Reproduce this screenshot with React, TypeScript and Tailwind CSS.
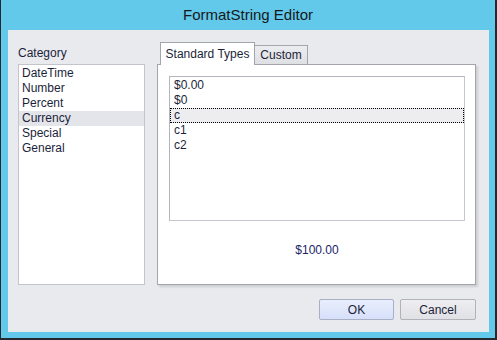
import React, { useState } from "react";

const categories = ["DateTime", "Number", "Percent", "Currency", "Special", "General"];
const formats = ["$0.00", "$0", "c", "c1", "c2"];

const App: React.FC = () => {
  const [category, setCategory] = useState<string>("Currency");
  const [format, setFormat] = useState<string>("c");
  const [tab, setTab] = useState<"standard" | "custom">("standard");

  return (
    <div
      className="w-[497px] h-[340px] bg-[#63c9ea] border-l border-r-2 border-b-2 border-[#23292e] flex flex-col text-[12px] text-[#1c1f3a]"
      style={{ fontFamily: '"Liberation Sans", Arial, sans-serif' }}
    >
      {/* title bar */}
      <div className="h-[30px] shrink-0 flex items-center justify-center text-[15px] text-[#15181c] pt-[1px]">
        FormatString Editor
      </div>

      {/* dialog body */}
      <div className="ml-[7px] mr-[6px] h-[302px] shrink-0 bg-[#e9eaee] pt-[12px] pl-[10px] pr-[13px] flex flex-col">
        <div className="h-[243px] flex gap-[12px]">
          {/* category column */}
          <div className="w-[127px] flex flex-col">
            <div className="mt-[4px] mb-[3px] leading-[15px] h-[15px]">Category</div>
            <div className="flex-1 bg-white border border-[#c3c4cc] py-[1px]">
              {categories.map((c) => (
                <div
                  key={c}
                  onClick={() => setCategory(c)}
                  className={
                    "h-[15px] leading-[15px] pl-[3px] cursor-default " +
                    (c === category ? "bg-[#e4e5ea]" : "")
                  }
                >
                  {c}
                </div>
              ))}
            </div>
          </div>

          {/* tabs column */}
          <div className="w-[319px] flex flex-col">
            <div className="h-[22px] flex items-end pl-[3px] relative z-10">
              <button
                onClick={() => setTab("standard")}
                className="w-[95px] h-[23px] -mb-[1px] bg-white border border-b-0 border-[#a3a4ac] leading-[20px] text-center"
              >
                Standard Types
              </button>
              <button
                onClick={() => setTab("custom")}
                className="w-[53px] h-[19px] bg-gradient-to-b from-[#ecedf0] to-[#dfe0e4] border border-l-0 border-b-0 border-[#a3a4ac] leading-[18px] text-center"
              >
                Custom
              </button>
            </div>
            <div className="flex-1 bg-white border border-[#a3a4ac] shadow-[2px_2px_2px_rgba(0,0,0,0.12)] pt-[11px] pl-[11px] pr-[10px] flex flex-col">
              {tab === "standard" && (
                <>
                  <div className="h-[145px] border border-[#b3b4bc] border-r-[#c6c7ce] border-b-[#c6c7ce] pt-[1px]">
                    {formats.map((f) => (
                      <div
                        key={f}
                        onClick={() => setFormat(f)}
                        className={
                          "h-[15px] leading-[13px] pl-[3px] cursor-default " +
                          (f === format
                            ? "bg-[#ededf0] border border-dotted border-black"
                            : "border border-transparent")
                        }
                      >
                        {f}
                      </div>
                    ))}
                  </div>
                  <div className="flex-1 flex items-center justify-center pb-[5px] text-[#1a2466]">
                    $100.00
                  </div>
                </>
              )}
            </div>
          </div>
        </div>

        {/* buttons */}
        <div className="mt-[14px] flex justify-end gap-[6px] pr-[0px]">
          <button className="w-[75px] h-[21px] rounded-[2px] border border-[#a9b0c6] bg-gradient-to-b from-[#e8eefc] to-[#d6e0fa] text-center">
            OK
          </button>
          <button className="w-[76px] h-[21px] rounded-[2px] border border-[#b1b2ba] bg-gradient-to-b from-[#eeeef1] to-[#e0e1e5] text-center">
            Cancel
          </button>
        </div>
      </div>
    </div>
  );
};

export default App;
